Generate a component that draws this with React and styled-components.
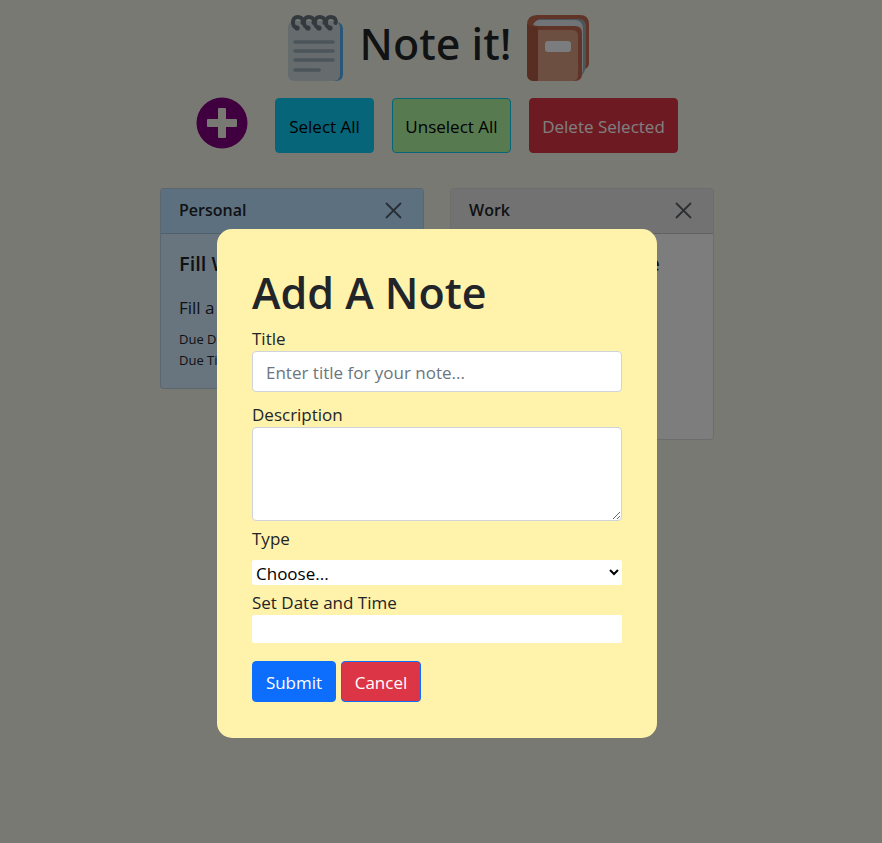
import React from "react";
import styled, { createGlobalStyle } from "styled-components";

const GlobalStyle = createGlobalStyle`
  *, *::before, *::after { box-sizing: border-box; }
  body {
    margin: 0;
    background: #f2f2e6;
    color: #212529;
    font: 400 17px/24px "Open Sans", "Noto Sans", sans-serif;
  }
  button, input, select, textarea { font: inherit; margin: 0; }
`;

const Page = styled.main`
  padding: 14px 8px 0 0;
`;

const Masthead = styled.header`
  display: flex;
  justify-content: center;
  align-items: flex-start;
  gap: 16px;
  padding-left: 4px;
`;

const PageTitle = styled.h1`
  margin: 3px 0 0;
  font-family: "Noto Sans", "Open Sans", sans-serif;
  font-size: 43px;
  font-weight: 500;
  line-height: 54px;
`;

const Toolbar = styled.div`
  display: flex;
  justify-content: center;
  align-items: center;
  gap: 18px;
  margin-top: 16px;
`;

const AddButton = styled.button`
  display: flex;
  margin-right: 9px;
  padding: 0 0 4px;
  border: 0;
  background: none;
`;

const ToolButton = styled.button`
  width: ${(p) => p.$width};
  height: 55px;
  padding: 4px 0 0;
  white-space: nowrap;
  border: 1px solid ${(p) => p.$border};
  border-radius: 4px;
  background: ${(p) => p.$fill};
  color: ${(p) => p.$ink};
`;

const Board = styled.section`
  display: flex;
  flex-wrap: wrap;
  justify-content: center;
  align-items: flex-start;
  gap: 26px;
  margin-top: 35px;
`;

const Card = styled.article`
  width: 264px;
  border: 1px solid rgba(0, 0, 0, 0.125);
  border-radius: 4px;
  background: ${(p) => p.$fill};
  overflow: hidden;
`;

const CardHeader = styled.div`
  display: flex;
  justify-content: space-between;
  align-items: center;
  height: 45px;
  padding: 0 21px 2px 18px;
  border-bottom: 1px solid rgba(0, 0, 0, 0.15);
  background: ${(p) => p.$fill};
  font-size: 16px;
  font-weight: 600;
`;

const CloseButton = styled.button`
  display: flex;
  padding: 0;
  border: 0;
  background: none;
  color: inherit;
  opacity: 0.7;
`;

const CardBody = styled.div`
  padding: 18px 18px 17px;
`;

const CardTitle = styled.h2`
  margin: 0 0 18px;
  font-size: 20px;
  font-weight: 600;
  line-height: 24px;
`;

const CardText = styled.p`
  margin: 0 0 8px;
  line-height: 27px;
`;

const Due = styled.div`
  font-size: 13px;
  line-height: 21px;
`;

const Overlay = styled.div`
  position: fixed;
  inset: 0;
  display: flex;
  justify-content: center;
  align-items: flex-start;
  padding: 229px 8px 0 0;
  overflow: auto;
  background: rgba(0, 0, 0, 0.5);
`;

const Dialog = styled.form`
  display: flex;
  flex-direction: column;
  width: 100%;
  max-width: 440px;
  padding: 35px 35px 36px;
  border-radius: 15px;
  background: #fff2ab;
`;

const DialogTitle = styled.h2`
  margin: 0;
  padding-top: 2px;
  font-size: 43px;
  font-weight: 600;
  line-height: 54px;
`;

const Fields = styled.div`
  display: flex;
  flex-direction: column;
  margin-top: 7px;
`;

const Field = styled.div`
  display: flex;
  flex-direction: column;
  margin-bottom: ${(p) => p.$after};
`;

const TextInput = styled.input`
  height: 41px;
  padding: 2px 13px 0;
  border: 1px solid #ced4da;
  border-radius: 4px;
  background: #fff;
  color: #212529;
  &::placeholder { color: #6c757d; opacity: 1; }
`;

const TextArea = styled.textarea`
  height: 94px;
  padding: 7px 13px;
  border: 1px solid #ced4da;
  border-radius: 4px;
  background: #fff;
  resize: vertical;
`;

const Select = styled.select`
  height: 25px;
  margin-top: 9px;
  padding: 1px 2px 0 0;
  border: 0;
  border-radius: 2px;
  background: #fff;
  color: #000;
`;

const DateInput = styled.input`
  height: 28px;
  padding: 0 4px;
  border: 0;
  border-radius: 2px;
  background: #fff;
`;

const Actions = styled.div`
  display: flex;
  gap: 5px;
`;

const ActionButton = styled.button`
  width: ${(p) => p.$width};
  height: 41px;
  padding: 2px 0 0;
  border: 1px solid #0d6efd;
  border-radius: 4px;
  background: ${(p) => p.$fill};
  color: #fff;
`;

const NotepadIcon = () => (
  <svg width="56" height="67" viewBox="0 0 56 67" aria-hidden="true">
    <path d="M12 8h37q6 1 6 7v45q0 7-7 7H12z" fill="#55acee" />
    <rect y="7" width="52" height="60" rx="6" fill="#ccd6dd" />
    <path d="M7 28h38M7 37h38M7 46h38M7 56h24" stroke="#99aab5" strokeWidth="3.6" strokeLinecap="round" />
    <g fill="none" stroke="#66757f" strokeWidth="4" strokeLinecap="round">
      {[0, 11, 22, 33].map((x) => (
        <path key={x} d={`M${x + 9} 14C${x + 3} 12 ${x + 4} 3 ${x + 9.5} 3C${x + 14} 3 ${x + 15.5} 6 ${x + 14.5} 9`} />
      ))}
    </g>
    <g fill="#66757f">
      {[9, 20, 31, 42].map((x) => <circle key={x} cx={x} cy="14" r="2.6" />)}
    </g>
  </svg>
);

const BookIcon = () => (
  <svg width="63" height="67" viewBox="0 0 63 67" aria-hidden="true">
    <path d="M10 1h43q9 0 9 9v39q0 4-4 6L40 60 0 58V11Q0 1 10 1z" fill="#c1694f" />
    <path d="M12 5h40q7 0 7 8v36q0 10-7 15V17L10 12q-4-4 2-7z" fill="#99aab5" />
    <path d="M12 6h35q9 0 9 9v38q0 8-4 11V18L12 12q-8 0-5-3 2-3 5-3z" fill="#e1e8ed" />
    <path d="M0 10q2 2 8 2h40q7 0 7 7v41q0 7-7 7H7q-7 0-7-7z" fill="#c1694f" />
    <path d="M11 16h34q6 0 6 6v39q0 6-6 6H11z" fill="#d99e82" />
    <path d="M0 10q3 3 11 3v54H7q-7 0-7-7z" fill="#b05c45" />
    <rect x="18" y="27" width="26" height="11" rx="3" fill="#f5f8fa" />
  </svg>
);

const PlusIcon = () => (
  <svg width="52" height="52" viewBox="0 0 52 52" aria-hidden="true">
    <circle cx="26" cy="26" r="25.5" fill="#800080" />
    <path
      d="M23 11h6q1 0 1 1v10h10q1 0 1 1v6q0 1-1 1H30v10q0 1-1 1h-6q-1 0-1-1V30H12q-1 0-1-1v-6q0-1 1-1h10V12q0-1 1-1z"
      fill="#f2f2e6"
    />
  </svg>
);

const CloseIcon = () => (
  <svg width="17" height="17" viewBox="0 0 17 17" aria-hidden="true">
    <path d="M1.5 1.5l14 14M15.5 1.5l-14 14" stroke="currentColor" strokeWidth="1.8" strokeLinecap="round" />
  </svg>
);

const tools = [
  { label: "Select All", width: "99px", fill: "#0dcaf0", border: "#0dcaf0", ink: "#000" },
  { label: "Unselect All", width: "119px", fill: "#b0f5a0", border: "#0dcaf0", ink: "#000" },
  { label: "Delete Selected", width: "149px", fill: "#dc3545", border: "#dc3545", ink: "#fff" },
];

const notes = [
  {
    type: "Personal",
    title: "Fill Water",
    text: "Fill a water bottle",
    date: "01/10/2021",
    time: "10:00",
    fill: "#d0eaff",
    head: "#bbe0ff",
  },
  {
    type: "Work",
    title: "Complete the space work",
    text: "Complete the work and share it with the team",
    date: "02/10/2021",
    time: "12:00",
    fill: "#fafafa",
    head: "#e5e5e5",
  },
];

export default function App() {
  return (
    <>
      <GlobalStyle />
      <Page>
        <Masthead>
          <NotepadIcon />
          <PageTitle>Note it!</PageTitle>
          <BookIcon />
        </Masthead>
        <Toolbar>
          <AddButton type="button" aria-label="Add a note"><PlusIcon /></AddButton>
          {tools.map((t) => (
            <ToolButton key={t.label} type="button" $width={t.width} $fill={t.fill} $border={t.border} $ink={t.ink}>
              {t.label}
            </ToolButton>
          ))}
        </Toolbar>
        <Board>
          {notes.map((n) => (
            <Card key={n.type} $fill={n.fill}>
              <CardHeader $fill={n.head}>
                {n.type}
                <CloseButton type="button" aria-label={`Close ${n.type}`}><CloseIcon /></CloseButton>
              </CardHeader>
              <CardBody>
                <CardTitle>{n.title}</CardTitle>
                <CardText>{n.text}</CardText>
                <Due>Due Date: {n.date}</Due>
                <Due>Due Time: {n.time}</Due>
              </CardBody>
            </Card>
          ))}
        </Board>
      </Page>
      <Overlay>
        <Dialog role="dialog" aria-labelledby="dialog-title" onSubmit={(e) => e.preventDefault()}>
          <DialogTitle id="dialog-title">Add A Note</DialogTitle>
          <Fields>
            <Field $after="11px">
              <label htmlFor="title">Title</label>
              <TextInput id="title" type="text" placeholder="Enter title for your note..." />
            </Field>
            <Field $after="6px">
              <label htmlFor="description">Description</label>
              <TextArea id="description" />
            </Field>
            <Field $after="6px">
              <label htmlFor="type">Type</label>
              <Select id="type" defaultValue="">
                <option value="">Choose...</option>
                <option>Personal</option>
                <option>Work</option>
              </Select>
            </Field>
            <Field $after="18px">
              <label htmlFor="when">Set Date and Time</label>
              <DateInput id="when" type="text" />
            </Field>
          </Fields>
          <Actions>
            <ActionButton type="submit" $width="84px" $fill="#0d6efd">Submit</ActionButton>
            <ActionButton type="button" $width="80px" $fill="#dc3545">Cancel</ActionButton>
          </Actions>
        </Dialog>
      </Overlay>
    </>
  );
}
